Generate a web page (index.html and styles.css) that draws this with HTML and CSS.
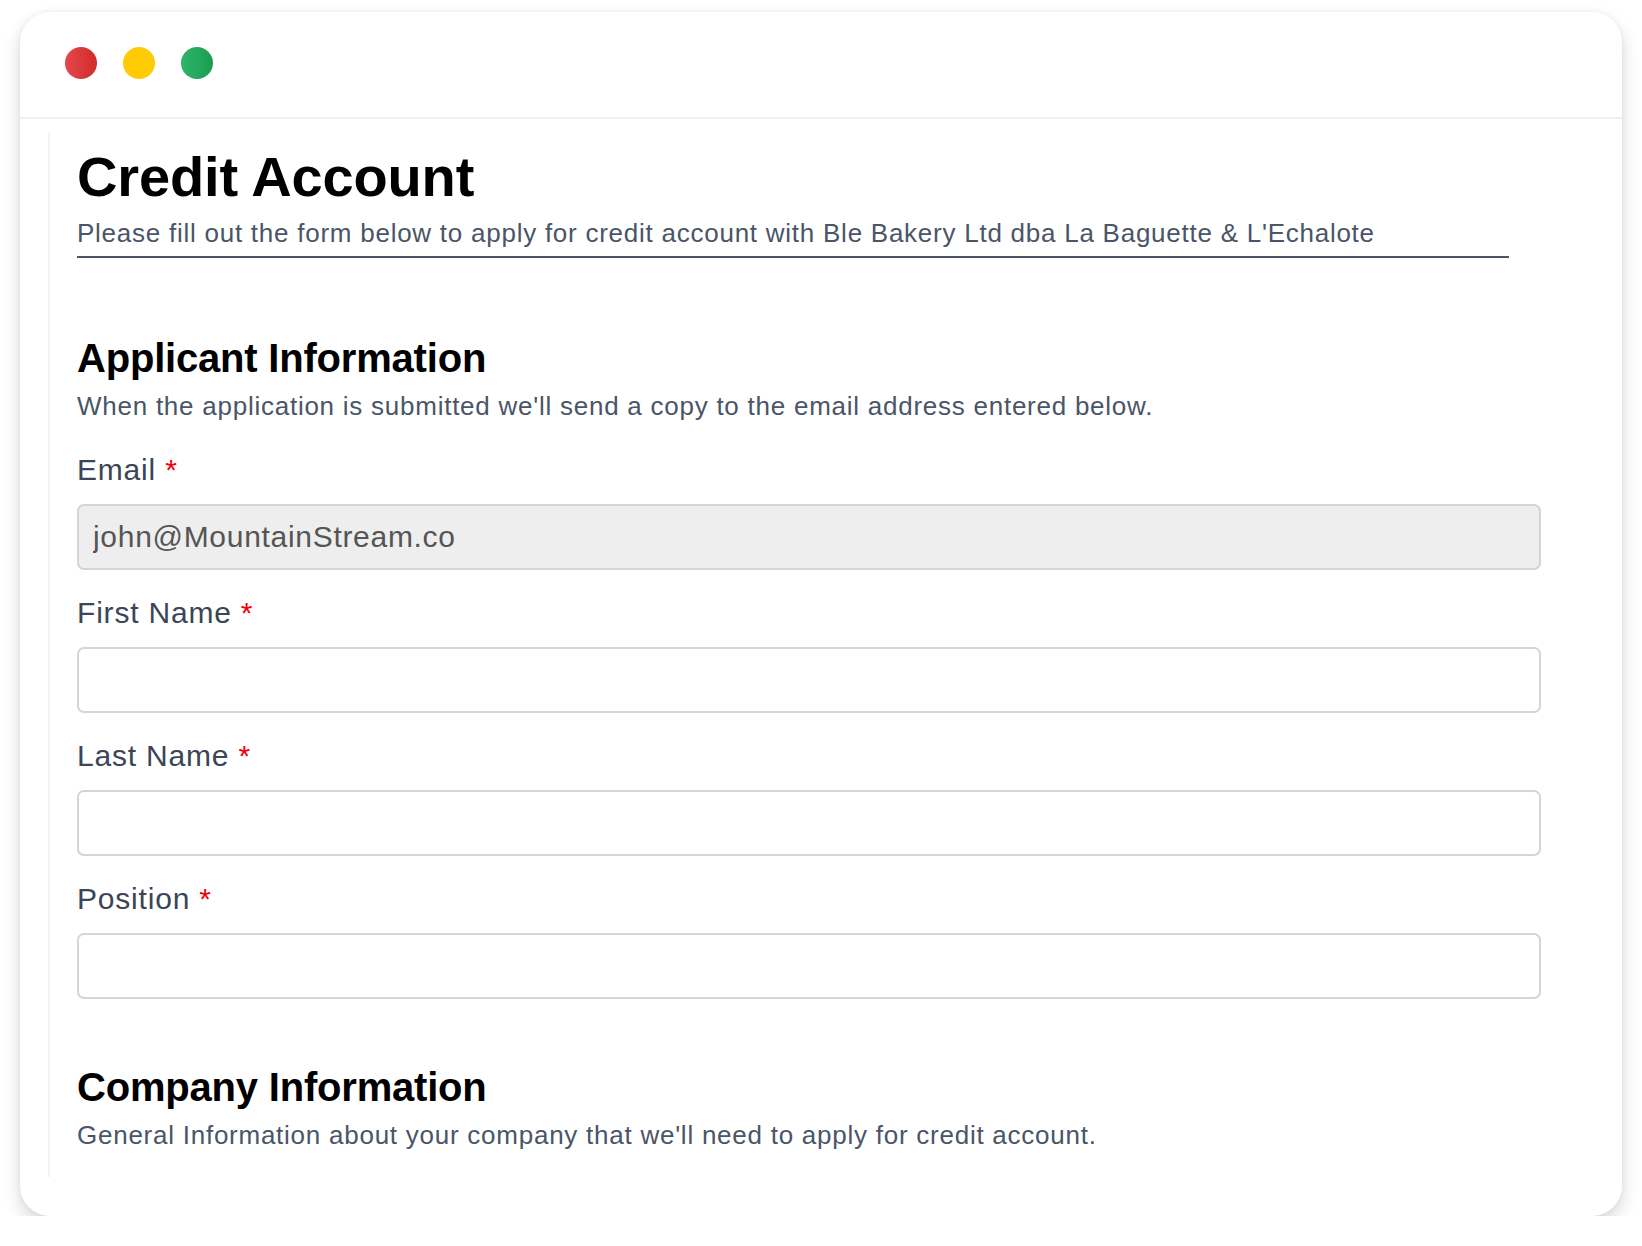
FILE: index.html
```html
<!DOCTYPE html>
<html>
  <head>
    <meta charset="utf-8">
    <title>Credit Account</title>
    <link rel="stylesheet" href="styles.css">
  </head>
  <body>
    <div class="window">
      <div class="titlebar">
        <span class="dot dot-red"></span>
        <span class="dot dot-yellow"></span>
        <span class="dot dot-green"></span>
      </div>
      <div class="content">
        <div class="form-header">
          <h1>Credit Account</h1>
          <p>Please fill out the form below to apply for credit account with Ble Bakery Ltd dba La Baguette &amp; L'Echalote</p>
        </div>

        <div class="section">
          <h2>Applicant Information</h2>
          <p class="section-desc">When the application is submitted we'll send a copy to the email address entered below.</p>
          <div class="field">
            <label for="email">Email <span class="req">*</span></label>
            <input id="email" class="input input-locked" type="text" value="john@MountainStream.co" readonly>
          </div>
          <div class="field">
            <label for="firstName">First Name <span class="req">*</span></label>
            <input id="firstName" class="input" type="text">
          </div>
          <div class="field">
            <label for="lastName">Last Name <span class="req">*</span></label>
            <input id="lastName" class="input" type="text">
          </div>
          <div class="field">
            <label for="position">Position <span class="req">*</span></label>
            <input id="position" class="input" type="text">
          </div>
        </div>

        <div class="section">
          <h2>Company Information</h2>
          <p class="section-desc">General Information about your company that we'll need to apply for credit account.</p>
        </div>
      </div>
    </div>
  </body>
</html>
```

FILE: styles.css
```css
* {
    box-sizing: border-box;
}

body {
    margin: 0;
    background: #fff;
    font-family: "Liberation Sans", Arial, Helvetica, sans-serif;
}

.window {
    margin: 12px 20px 0 20px;
    background: #fff;
    border-radius: 30px;
    box-shadow: 0 9px 18px rgba(0, 0, 0, 0.15), 0 0 6px rgba(0, 0, 0, 0.06);
    overflow: hidden;
}

.titlebar {
    display: flex;
    gap: 26px;
    height: 107px;
    padding: 35px 0 0 45px;
    border-bottom: 2px solid #efefef;
}
.dot {
    width: 32px;
    height: 32px;
    border-radius: 50%;
}
.dot-red {
    background: linear-gradient(90deg, #e5474b, #d12b2b);
}
.dot-yellow {
    background: #ffcb05;
}
.dot-green {
    background: linear-gradient(90deg, #2db56c, #1b9d4f);
}

.content {
    margin: 13px 0 39px 28px;
    padding: 13px 81px 26px 27px;
    border-left: 2px solid #f3f3f3;
}

.form-header {
    margin: 0 32px 76px 0;
    padding-bottom: 7px;
    border-bottom: 2px solid #4b5563;
}
.form-header h1 {
    margin: 0 0 8px 0;
    font-size: 56px;
    line-height: 64px;
    font-weight: bold;
    letter-spacing: -0.15px;
    color: #000;
}
.form-header p {
    margin: 0;
    font-size: 26px;
    line-height: 32px;
    letter-spacing: 0.75px;
    color: #4a5568;
}

.section + .section {
    margin-top: 64px;
}
.section h2 {
    margin: 0 0 8px 0;
    font-size: 40px;
    line-height: 48px;
    font-weight: bold;
    letter-spacing: -0.2px;
    color: #000;
}
.section-desc {
    margin: 0 0 28px 0;
    font-size: 26px;
    line-height: 32px;
    letter-spacing: 0.75px;
    color: #4a5568;
}
.section-desc:last-child {
    margin-bottom: 0;
}

.field {
    margin-bottom: 23px;
}
.field label {
    display: block;
    margin-bottom: 14px;
    font-size: 30px;
    line-height: 40px;
    letter-spacing: 0.8px;
    color: #3a4556;
}
.req {
    color: #f5000a;
    font-size: 30px;
}

.input {
    display: block;
    width: 100%;
    height: 66px;
    padding: 0 14px;
    border: 2px solid #d5d5d5;
    border-radius: 7px;
    background: #fff;
    font-family: "Liberation Sans", Arial, Helvetica, sans-serif;
    font-size: 30px;
    letter-spacing: 0.7px;
    color: #555;
    outline: none;
}
.input-locked {
    background: #eeeeee;
    color: #555;
}
```
